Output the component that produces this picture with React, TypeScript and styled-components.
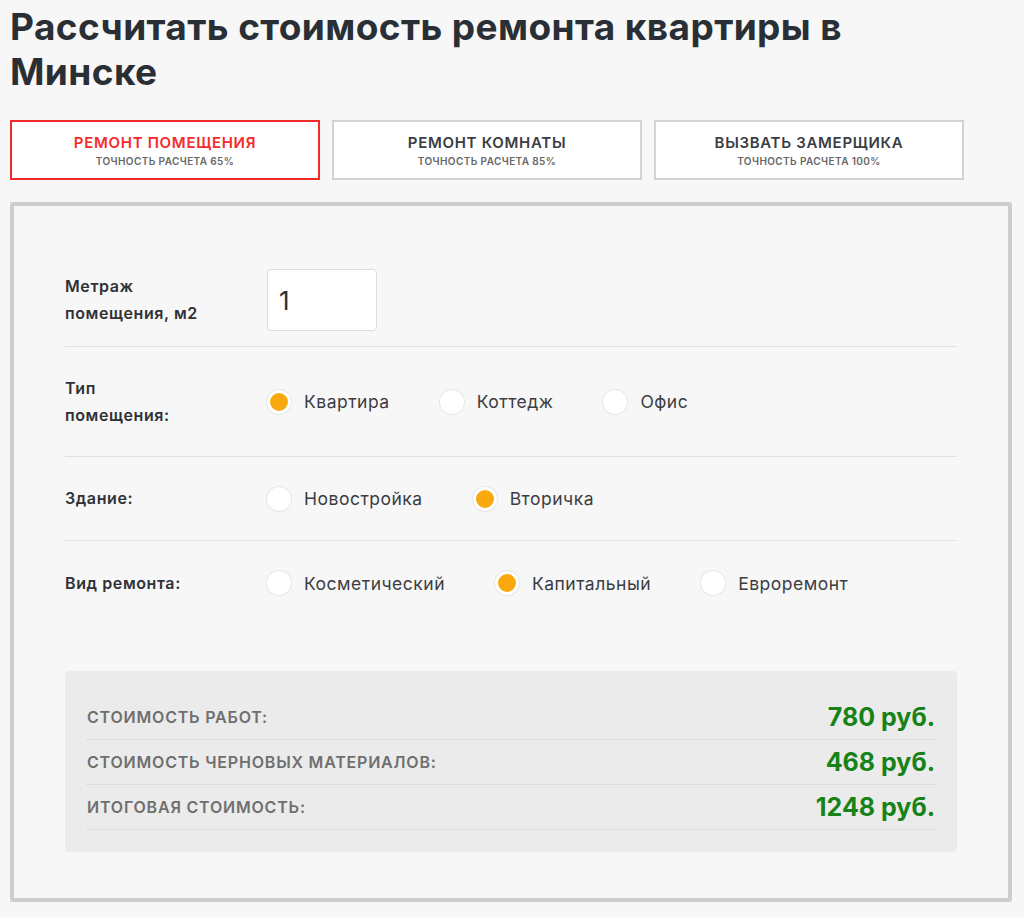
import React from "react"
import styled, { createGlobalStyle } from "styled-components"

const Global = createGlobalStyle`
    body {
        margin: 0;
        background: #f7f7f7;
        font-family: Inter, "Open Sans", sans-serif;
        color: #2f3136;
    }
`

const Page = styled.div`
    padding: 0 10px;
    width: 1002px;
`

const Title = styled.h1`
    margin: 0;
    padding-top: 4px;
    max-width: 920px;
    font-size: 37px;
    line-height: 45px;
    font-weight: 700;
    color: #2a2f36;
    letter-spacing: 0.4px;
`

const Tabs = styled.div`
    display: flex;
    gap: 12px;
    margin-top: 26px;
`

const Tab = styled.div<{ $active?: boolean }>`
    width: 310px;
    height: 60px;
    box-sizing: border-box;
    border: 2px solid ${({ $active }) => ($active ? "#f52a2a" : "#d3d3d3")};
    background: #fff;
    display: flex;
    flex-direction: column;
    align-items: center;
    justify-content: center;
    gap: 3px;
`

const TabTitle = styled.div<{ $active?: boolean }>`
    font-size: 15px;
    font-weight: 600;
    letter-spacing: 0.7px;
    color: ${({ $active }) => ($active ? "#f52a2a" : "#3a3d42")};
`

const TabSub = styled.div`
    font-size: 10px;
    font-weight: 600;
    letter-spacing: 0.4px;
    color: #666;
`

const Panel = styled.div`
    margin-top: 22px;
    border: 4px solid #cdcdcd;
    border-radius: 3px;
    background: #f7f7f7;
    padding: 48px 51px 46px 51px;
`

const Row = styled.div<{ $h: number; $last?: boolean }>`
    display: flex;
    align-items: center;
    height: ${({ $h }) => $h}px;
    border-bottom: ${({ $last }) => ($last ? "none" : "1px solid #e0e0e0")};
`

const Label = styled.div`
    width: 202px;
    font-size: 16px;
    font-weight: 600;
    letter-spacing: 0.6px;
    line-height: 27px;
    color: #2f3136;
`

const Input = styled.div`
    width: 110px;
    height: 62px;
    box-sizing: border-box;
    border: 1px solid #dedede;
    border-radius: 4px;
    background: #fff;
    display: flex;
    align-items: center;
    padding-left: 11px;
    font-size: 26px;
    color: #2f3136;
`

const Options = styled.div`
    display: flex;
    gap: 50px;
`

const Option = styled.label`
    display: flex;
    align-items: center;
    gap: 13px;
    font-size: 17.5px;
    letter-spacing: 0.5px;
    color: #3a3d42;
`

const Radio = styled.span<{ $checked?: boolean }>`
    width: 24px;
    height: 24px;
    box-sizing: border-box;
    border-radius: 50%;
    background: ${({ $checked }) => ($checked ? "#f7a90e" : "#fff")};
    border: ${({ $checked }) => ($checked ? "3px solid #fff" : "none")};
    box-shadow: 0 0 0 1px #e6e6e6;
`

const Results = styled.div`
    margin-top: 46px;
    background: #ebebeb;
    border-radius: 4px;
    padding: 24px 22px 22px 22px;
`

const ResultRow = styled.div`
    display: flex;
    justify-content: space-between;
    align-items: center;
    height: 44px;
    border-bottom: 1px dotted #cfcfcf;
`

const ResultLabel = styled.div`
    font-size: 16px;
    font-weight: 600;
    color: #6f6f6f;
    text-transform: uppercase;
    letter-spacing: 0.8px;
`

const ResultValue = styled.div`
    font-size: 25px;
    font-weight: 700;
    color: #178217;
`

const tabs = [
    { title: "Ремонт помещения", sub: "Точность расчета 65%", active: true },
    { title: "Ремонт комнаты", sub: "Точность расчета 85%" },
    { title: "Вызвать замерщика", sub: "Точность расчета 100%" },
]

const groups = [
    { label: ["Тип", "помещения:"], options: ["Квартира", "Коттедж", "Офис"], checked: 0, h: 109 },
    { label: ["Здание:"], options: ["Новостройка", "Вторичка"], checked: 1, h: 83 },
    { label: ["Вид ремонта:"], options: ["Косметический", "Капитальный", "Евроремонт"], checked: 1, h: 84 },
]

const results = [
    ["Стоимость работ:", "780 руб."],
    ["Стоимость черновых материалов:", "468 руб."],
    ["Итоговая стоимость:", "1248 руб."],
]

const App: React.FC = () => {
    return (
        <Page>
            <Global />
            <Title>Рассчитать стоимость ремонта квартиры в Минске</Title>
            <Tabs>
                {tabs.map((t) => (
                    <Tab key={t.title} $active={t.active}>
                        <TabTitle $active={t.active}>{t.title.toUpperCase()}</TabTitle>
                        <TabSub>{t.sub.toUpperCase()}</TabSub>
                    </Tab>
                ))}
            </Tabs>
            <Panel>
                <Row $h={92}>
                    <Label>
                        Метраж
                        <br />
                        помещения, м2
                    </Label>
                    <Input>1</Input>
                </Row>
                {groups.map((g, gi) => (
                    <Row key={gi} $h={g.h} $last={gi === groups.length - 1}>
                        <Label>
                            {g.label.map((l, i) => (
                                <div key={i}>{l}</div>
                            ))}
                        </Label>
                        <Options>
                            {g.options.map((o, i) => (
                                <Option key={o}>
                                    <Radio $checked={i === g.checked} />
                                    {o}
                                </Option>
                            ))}
                        </Options>
                    </Row>
                ))}
                <Results>
                    {results.map(([l, v]) => (
                        <ResultRow key={l}>
                            <ResultLabel>{l}</ResultLabel>
                            <ResultValue>{v}</ResultValue>
                        </ResultRow>
                    ))}
                </Results>
            </Panel>
        </Page>
    )
}

export default App
